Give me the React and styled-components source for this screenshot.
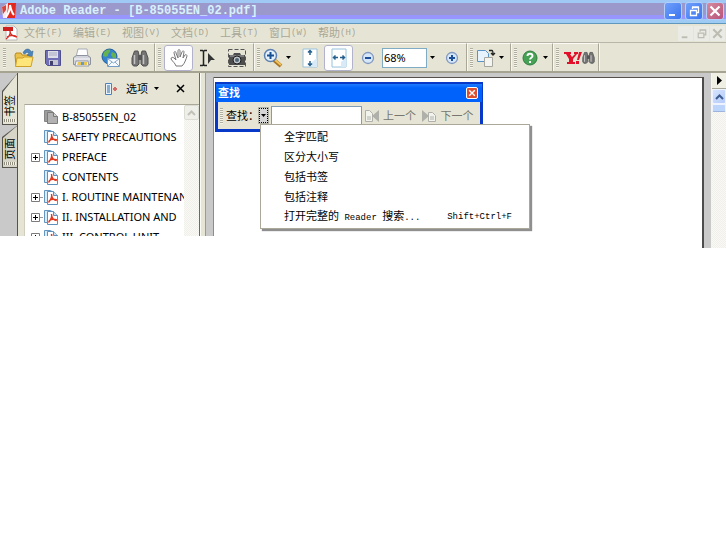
import styled, { createGlobalStyle, css } from 'styled-components';

const cjk = `"Liberation Sans", "Noto Sans CJK SC", sans-serif`;
const mono = `"Liberation Mono", "Noto Sans CJK SC", monospace`;
const tahoma = `"Noto Sans", "Noto Sans CJK SC", sans-serif`;

const beige = '#e6e5d5';
const grey = '#c9c9c9';

const GlobalStyle = createGlobalStyle`
  * {
    box-sizing: border-box;
  }

  body {
    margin: 0;
    background: #fff;
    color: #000;
    font-family: ${cjk};
    font-size: 11px;
    line-height: 16px;
  }

  button,
  input {
    margin: 0;
    padding: 0;
    border: 0;
    border-radius: 0;
    background: none;
    color: inherit;
    font: inherit;
  }

  ul {
    margin: 0;
    padding: 0;
    list-style: none;
  }

  svg {
    display: block;
    flex: none;
  }
`;

const TitleBar = styled.header`
  display: flex;
  align-items: center;
  height: 24px;
  padding: 0 2px 1px 1px;
  gap: 3px;
  border-bottom: 1px solid #5f97bd;
  background: linear-gradient(
    #9fc8f5 0 3px,
    #9b98cb 3px 15px,
    #9896fd 15px 19px,
    #9ecbf4 19px
  );
`;

const WindowTitle = styled.h1`
  flex: 1;
  margin: 0;
  color: #d9f1ff;
  font-family: ${mono};
  font-size: 12px;
  font-weight: 700;
  line-height: 20px;
  white-space: nowrap;
`;

const WindowButton = styled.button`
  width: 18px;
  height: 18px;
  border: 1px solid #b4d0fa;
  border-radius: 3px;
  background: ${({ $close }) =>
    $close
      ? 'linear-gradient(135deg, #d58b9d, #b8537a)'
      : 'linear-gradient(135deg, #6fa0fb, #3c74ee)'};
`;

const MenuBar = styled.nav`
  display: flex;
  align-items: center;
  height: 18px;
  padding: 0 1px 0 3px;
  background: ${beige};
`;

const MenuList = styled.ul`
  display: flex;
  flex: 1;
  margin-left: 6px;
`;

const MenuItem = styled.li`
  width: 49px;
`;

const MenuButton = styled.button`
  display: flex;
  color: #a9a797;
  white-space: nowrap;
`;

const Latin = styled.span`
  font-family: ${mono};
  font-size: 9px;
`;

const MdiButton = styled.button`
  width: 15px;
  height: 15px;
  margin-left: 1px;
  background: #ebebe6;
`;

const Toolbar = styled.div`
  display: flex;
  height: 31px;
  border-top: 1px solid #b7b6a8;
  border-bottom: 2px solid #a5a392;
  background: ${beige};
`;

const ToolGroup = styled.div`
  display: flex;
  align-items: center;
  padding: 0 ${({ $tight }) => ($tight ? '0' : '2px')} 0 3px;
  border-top: 1px solid #fbfbf4;
  border-right: 1px solid #a9a798;
  box-shadow: 1px 0 #f8f8f0;
`;

const Grip = styled.span`
  flex: none;
  width: 3px;
  height: ${({ $short }) => ($short ? '16px' : '20px')};
  margin-right: 3px;
  background: repeating-linear-gradient(#b0af9f 0 1px, #f4f4ea 1px 2px);
`;

const ToolButton = styled.button`
  display: flex;
  align-items: center;
  justify-content: center;
  width: 29px;
  height: 26px;
  border-radius: 3px;

  ${({ $active }) =>
    $active &&
    css`
      border: 1px solid #b3b2cd;
      background: #fdfdfd;
    `}
`;

const DropButton = styled(ToolButton)`
  justify-content: flex-start;
  gap: 3px;
  width: 32px;
`;

const SearchButton = styled(ToolButton)`
  width: 34px;
`;

const ZoomBox = styled.div`
  display: flex;
  align-items: center;
  width: 55px;
`;

const ZoomInput = styled.input`
  width: 45px;
  height: 20px;
  padding-left: 1px;
  border: 1px solid #7fabc4;
  background: #fff;
  font-family: ${tahoma};
`;

const CaretButton = styled.button`
  display: flex;
  align-items: center;
  justify-content: center;
  width: 10px;
  height: 20px;
`;

const Workspace = styled.main`
  display: flex;
  align-items: flex-start;
`;

const LeftPane = styled.aside`
  display: flex;
  flex: none;
  height: 163px;
  overflow: hidden;
  background: ${grey};
`;

const TabStrip = styled.div`
  width: 18px;
  padding-left: 2px;
  border-right: 1px solid #55544c;
`;

const SideTab = styled.button`
  display: block;
  width: 16px;
  height: ${({ $height }) => $height}px;
  padding: 1px;
  background: #55544c;
  clip-path: polygon(100% 0, 100% 100%, 0 100%, 0 ${({ $slant }) => $slant}px);
`;

const SideTabFace = styled.span`
  display: flex;
  align-items: center;
  justify-content: flex-end;
  flex-direction: column;
  height: 100%;
  padding-bottom: 2px;
  gap: 2px;
  background: ${({ $active }) => ($active ? beige : '#d6d5c8')};
  clip-path: polygon(100% 0, 100% 100%, 0 100%, 0 ${({ $slant }) => $slant}px);
`;

const SideLabel = styled.span`
  writing-mode: vertical-rl;
  text-orientation: sideways;
  transform: rotate(180deg);
  font-size: 11px;
  line-height: 14px;
`;

const TabGrip = styled.span`
  width: 12px;
  height: 3px;
  background: repeating-linear-gradient(90deg, #918f80 0 1px, #f4f4ea 1px 2px);
`;

const Bookmarks = styled.section`
  width: 182px;
  padding-left: 6px;
  border-right: 1px solid #6b6a66;
  background: ${beige};
`;

const BookmarksHeader = styled.div`
  display: flex;
  align-items: center;
  justify-content: flex-end;
  height: 31px;
  padding-right: 14px;
`;

const OptionsButton = styled.button`
  display: flex;
  align-items: center;
  gap: 6px;
  margin-right: 17px;

  svg:first-child {
    margin-right: 2px;
  }
`;

const TreeBox = styled.div`
  display: flex;
  height: 132px;
  border-top: 1px solid #aaa999;
  border-left: 1px solid #cfcebf;
  background: #fff;
`;

const Tree = styled.ul`
  flex: 1;
  min-width: 0;
  padding: 2px 0 0 6px;
  overflow: hidden;
`;

const TreeRow = styled.li`
  display: flex;
  align-items: center;
  height: 20px;
  font-family: ${tahoma};
  white-space: nowrap;
`;

const Expander = styled.button`
  flex: none;
  width: 12px;
  height: 9px;
`;

const Indent = styled.span`
  flex: none;
  width: 12px;
`;

const TreeLink = styled.a`
  display: flex;
  align-items: center;
  gap: 3px;
  color: #000;
  text-decoration: none;
`;

const Track = styled.div`
  flex: none;
  width: 15px;
  background: repeating-conic-gradient(#f0efe9 0 25%, #f9f9f6 0 50%) 0 0 / 2px 2px;
`;

const ScrollButton = styled.button`
  display: flex;
  align-items: center;
  justify-content: center;
  width: 100%;
  height: 15px;
  border: 1px solid ${({ $dim }) => ($dim ? '#dddcd2' : '#eef3ff')};
  border-radius: 2px;
  background: ${({ $dim }) => ($dim ? '#efefe9' : 'linear-gradient(135deg, #d5e3fd, #b5cbfa)')};
`;

const Splitter = styled.div`
  flex: none;
  width: 6px;
  height: 163px;
  border-right: 1px solid #9b9a93;
  border-left: 1px solid #fbfbf5;
  background: ${beige};
`;

const Gutter = styled.div`
  flex: none;
  width: 8px;
  height: 163px;
  padding-top: 4px;
  background: ${grey};

  &::after {
    content: '';
    display: block;
    height: 100%;
    border-right: 1px solid #97897c;
  }
`;

const PageArea = styled.div`
  flex: 1;
  height: 175px;
  padding: 4px 7px 0 0;
  background: linear-gradient(${grey} 6px, transparent 6px),
    linear-gradient(270deg, ${grey} 8px, transparent 8px);
`;

const Page = styled.div`
  position: relative;
  height: 171px;
  border-top: 1px solid #55504c;
  border-right: 2px solid #4c4c4c;
  background: #fff;
`;

const PageScroll = styled(Track)`
  height: 175px;
  border-left: 1px solid #f6f6ee;
`;

const PaneButton = styled.button`
  display: flex;
  align-items: center;
  justify-content: center;
  width: 100%;
  height: 16px;
  border-bottom: 1px solid #aaa89a;
  background: #f0efe4;
`;

const Thumb = styled.div`
  height: 8px;
  border: 1px solid #eef3ff;
  border-bottom-color: #9db5dc;
  border-radius: 2px;
  background: #bdd4fb;
`;

const FindWindow = styled.section`
  position: absolute;
  top: 4px;
  left: 1px;
  width: 268px;
  padding: 2px 3px 3px;
  background: #0838c8;
`;

const FindTitle = styled.div`
  display: flex;
  align-items: center;
  justify-content: space-between;
  height: 18px;
  margin: 0 -2px;
  padding: 0 4px 0 2px;
  background: linear-gradient(#1d7bff, #0062fb 4px);
`;

const FindHeading = styled.h2`
  margin: 0;
  color: #fff;
  font-size: 11px;
  line-height: 16px;
`;

const FindClose = styled.button`
  display: flex;
  align-items: center;
  justify-content: center;
  width: 12px;
  height: 12px;
  border: 1px solid #fff;
  border-radius: 2px;
  background: #dc5030;
`;

const FindBody = styled.div`
  display: flex;
  align-items: center;
  height: 27px;
  padding-left: 2px;
  background: ${beige};
`;

const FindLabel = styled.label`
  width: 33px;
  white-space: nowrap;
`;

const FindDrop = styled.button`
  display: flex;
  align-items: center;
  justify-content: center;
  width: 9px;
  height: 15px;
  margin-right: 3px;
  border: 1px dotted #000;
  background: #d5d5d5;
  box-shadow: 0 0 0 1px #b3b2a6;
`;

const FindInput = styled.input`
  width: 91px;
  height: 20px;
  margin-right: 3px;
  padding: 0 3px;
  border: 1px solid #7f9db9;
  background: #fff;
`;

const FindStep = styled.button`
  display: flex;
  align-items: center;
  gap: 4px;
  width: 58px;
  color: #77776f;
  white-space: nowrap;
`;

const FindMenu = styled.ul`
  position: absolute;
  top: 42px;
  left: 45px;
  z-index: 1;
  width: 270px;
  padding: 2px 0 1px;
  border: 1px solid #aca899;
  background: #fff;
  box-shadow: 2px 2px 1px #8f8f8f;
`;

const FindMenuItem = styled.li`
  height: 20px;
`;

const FindMenuButton = styled.button`
  display: flex;
  justify-content: space-between;
  align-items: center;
  width: 100%;
  height: 20px;
  padding: 0 17px 0 23px;
  white-space: pre;
`;

const AdobeLogo = () => (
  <svg width="16" height="18" viewBox="0 0 16 18">
    <path d="M7 1h8l-1 15H5z" fill="#e5281e" />
    <path d="M1 5l6-4-1 15H2z" fill="#fbeaea" />
    <path d="M1 5l4-2v5l-3 4z" fill="#d8453c" />
    <path d="M9 3C9 8 8 11 5 15M9 3c1 5 2 8 4 10" stroke="#fff" strokeWidth="2" fill="none" />
  </svg>
);

const PdfIcon = ({ plain }) => (
  <svg width="16" height="16" viewBox="0 0 16 16">
    {plain ? (
      <>
        <path d="M1.500 1.500h6l3 2v9h-9z" fill="#9d9d9d" stroke="#858585" />
        <path d="M4.500 3.500h6l4 4v7h-10z" fill="#b2b2b2" stroke="#7b7b7b" />
        <path d="M10.500 3.500v4h4" fill="#d0d0d0" stroke="#7b7b7b" />
      </>
    ) : (
      <>
        <path d="M1.500 1.500h6l3 2v10h-9z" fill="#d8ebfa" stroke="#6495bf" />
        <path d="M4.500 2.500h6l4 4v9h-10z" fill="#fff" stroke="#5f90bb" />
        <path d="M10.500 2.500v4h4" fill="#c8e0f4" stroke="#5f90bb" />
        <path d="M8.500 5c1 3-1 6-3 8.500M8.500 5c0 4 2 6 5 6.500M6 12c2-2 5-2 8-1" fill="none" stroke="#e2391f" strokeWidth="1.400" />
      </>
    )}
  </svg>
);

const DocIcon = () => (
  <svg width="15" height="16" viewBox="0 0 15 16">
    <path d="M3 1h8l3 3v11H3z" fill="#fff" stroke="#b8b8b8" />
    <path d="M0 2h10v4H0z" fill="#cf2020" />
    <path d="M7 6c1 3-2 7-4 8M7 6c0 4 3 5 7 6M4 12c3-2 6-2 9-1" fill="none" stroke="#d92a20" strokeWidth="1.300" />
  </svg>
);

const Caret = () => (
  <svg width="5" height="3" viewBox="0 0 5 3">
    <path d="M0 0h5L2.500 3z" fill="#000" />
  </svg>
);

const MinGlyph = ({ color = '#fff' }) => (
  <svg width="100%" height="100%" viewBox="0 0 16 16">
    <path d="M4 11h6v2H4z" fill={color} />
  </svg>
);

const RestoreGlyph = ({ color = '#fff' }) => (
  <svg width="100%" height="100%" viewBox="0 0 16 16">
    <path d="M6.500 6V4.500h6v5H11M6 4h7M4.500 7.500h6v5h-6zM4 7.500h7" fill="none" stroke={color} strokeWidth="1.300" />
  </svg>
);

const CloseGlyph = ({ color = '#fff' }) => (
  <svg width="100%" height="100%" viewBox="0 0 16 16">
    <path d="M3.500 3.500l9 9M12.500 3.500l-9 9" stroke={color} strokeWidth="2.200" />
  </svg>
);

const OpenIcon = () => (
  <svg width="20" height="20" viewBox="0 0 20 20">
    <path d="M1 7l1-2h5l1 2h8v11H2z" fill="#eac14a" stroke="#b98a1c" />
    <path d="M9 5c2-5 7-5 8-1l2-1-1 6-5-2 2-1c-1-2-3-2-4 0z" fill="#4d86bd" stroke="#33658f" strokeWidth=".6" />
    <path d="M1.500 18.500L3 10h6l1-1h9l-2 9.500z" fill="#fde57a" stroke="#cfa028" />
  </svg>
);

const SaveIcon = () => (
  <svg width="18" height="18" viewBox="0 0 18 18">
    <path d="M1.500 1.500h15v15h-13l-2-2z" fill="#7170b6" stroke="#504f8d" />
    <path d="M4 2h10v7H4z" fill="#dcdde6" />
    <path d="M5 4h8M5 6h8" stroke="#a9abc4" />
    <path d="M5 11h9v5H5z" fill="#c6c6d2" />
    <path d="M6 12h3v4H6z" fill="#41416c" />
  </svg>
);

const PrintIcon = () => (
  <svg width="20" height="20" viewBox="0 0 20 20">
    <path d="M6 1h9l1 8H4z" fill="#fff" stroke="#a5abb5" />
    <path d="M1.500 9.500l3-2h11l3 2v7h-17z" fill="#d1d4da" stroke="#8d929c" />
    <path d="M2 11h16" stroke="#f8f8f8" />
    <path d="M4 13h12l1 5H3z" fill="#f4f4f4" stroke="#989ca4" />
    <path d="M6 14h9v3H5z" fill="#e9c650" />
    <path d="M9 14h3v3H9z" fill="#659bca" />
  </svg>
);

const MailIcon = () => (
  <svg width="20" height="20" viewBox="0 0 20 20">
    <circle cx="8.500" cy="8.500" r="7.500" fill="#3483cc" stroke="#205d99" />
    <path d="M3 4c2-2 5-3 6-2 1 2-2 3-2 5s-3 2-5 1zM11 4l4 2v5l-3-1-2-3z" fill="#65b24f" />
    <path d="M6.500 10.500h12v8h-12z" fill="#f7fbff" stroke="#759dc4" />
    <path d="M7 11l5.500 4 5.500-4M7 18l4-4M18 18l-4-4" fill="none" stroke="#88abcb" />
  </svg>
);

const Binoculars = ({ size = 18 }) => (
  <svg width={size} height={size} viewBox="0 0 18 18">
    <path d="M3.500 2h3.500l1 4v9l-2 2H2.500L1 15V9zM11 2h3.500L17 9v6l-1.500 2H12l-2-2V6z" fill="#757575" stroke="#505050" />
    <path d="M7 6h4v5H7z" fill="#565656" />
    <path d="M3.500 6v9M12.500 6v9" stroke="#c4c4c4" strokeWidth="1.500" />
  </svg>
);

const HandIcon = () => (
  <svg width="20" height="20" viewBox="0 0 20 20">
    <path
      d="M7 18c-1-3-3-4-5-7 0-2 2-2 3-1l2 2-2-7c0-2 2-2 2 0l2 5V3c0-2 2-2 2 0v6l2-5c1-2 2-1 2 0l-1 6 2-3c1-1 2 0 2 1-1 3-2 7-5 10z"
      fill="#fff"
      stroke="#777"
    />
  </svg>
);

const TextSelectIcon = () => (
  <svg width="18" height="18" viewBox="0 0 18 18">
    <path d="M1 1.500h2.500l1 1 1-1H8M4.500 2v14M1 16.500h2.500l1-1 1 1H8" fill="none" stroke="#222" strokeWidth="1.500" />
    <path d="M9 4l7 7h-4l-3 4z" fill="#333" />
  </svg>
);

const SnapshotIcon = () => (
  <svg width="20" height="20" viewBox="0 0 20 20">
    <path d="M1.500 1.500h17v17h-17z" fill="none" stroke="#555" strokeDasharray="4 2" />
    <path d="M2 7h4l1-2h6l1 2h4v10H2z" fill="#4d4d4d" />
    <path d="M3 8h14" stroke="#a9a9a9" />
    <circle cx="10" cy="12" r="4" fill="#bfc5cb" stroke="#1d1d1d" />
    <circle cx="10" cy="12" r="2" fill="#4f6371" />
  </svg>
);

const LoupeIcon = () => (
  <svg width="20" height="20" viewBox="0 0 20 20">
    <path d="M11 12l7 6" stroke="#a87424" strokeWidth="4" />
    <path d="M12 12l6 5" stroke="#f0c35e" strokeWidth="2" />
    <circle cx="7.500" cy="7.500" r="6" fill="#e3f1fd" stroke="#5d80b0" strokeWidth="1.500" />
    <path d="M4 7.500h7M7.500 4v7" stroke="#174f94" strokeWidth="2" />
  </svg>
);

const FitIcon = ({ wide }) => (
  <svg width="16" height="20" viewBox="0 0 16 20">
    <path d="M1 1h14v18H1z" fill="#fff" stroke="#98c1dc" />
    <path d="M10 19v-5l5-4v9z" fill="#d8e9f7" />
    {wide ? (
      <path d="M7 9.500H3M4.500 7.500l-2 2 2 2M9 9.500h4M11.500 7.500l2 2-2 2" fill="none" stroke="#245f8d" strokeWidth="1.500" />
    ) : (
      <path d="M8 7V3M6 4.500l2-2 2 2M8 13v4M6 15.500l2 2 2-2" fill="none" stroke="#245f8d" strokeWidth="1.500" />
    )}
  </svg>
);

const StepIcon = ({ plus }) => (
  <svg width="14" height="14" viewBox="0 0 14 14">
    <circle cx="7" cy="7" r="5.500" fill="#d7e7fa" stroke="#8299bf" strokeWidth="1.300" />
    <path d={plus ? 'M4 7h6M7 4v6' : 'M4 7h6'} stroke="#1c4f99" strokeWidth="2" />
  </svg>
);

const RotateIcon = () => (
  <svg width="20" height="20" viewBox="0 0 20 20">
    <path d="M1.500 2.500h8l3 3v8h-11z" fill="#e6f3fe" stroke="#5d93c4" />
    <path d="M8.500 9.500h8v9h-8z" fill="#f4f4f0" stroke="#a6a69e" />
    <path d="M13 2.500h3c1 0 1 1 1 4M15 5l2 2 2-2" fill="none" stroke="#222" strokeWidth="1.300" />
  </svg>
);

const HelpIcon = () => (
  <svg width="20" height="20" viewBox="0 0 20 20">
    <circle cx="10" cy="10" r="7" fill="#48a256" stroke="#2f7d3f" />
    <path d="M7.500 8c0-3 5-3 5 0 0 1.700-2.500 1.700-2.500 3.600M10 13v2" fill="none" stroke="#fff" strokeWidth="1.900" />
  </svg>
);

const YahooIcon = () => (
  <svg width="18" height="14" viewBox="0 0 18 14">
    <path d="M0 1h7v2H6l2 3 3-3h-1V1h4v2h-1L9 8v3h2v2H3v-2h2V8L2 3H0zM15 1h3l-3 8h-2zM12 10h3v3h-3z" fill="#e2112b" />
  </svg>
);

const OptionsIcon = () => (
  <svg width="13" height="12" viewBox="0 0 13 12">
    <path d="M.5.500h6v11h-6z" fill="#e9f3fd" stroke="#4a83bb" />
    <path d="M2 3h3M2 5h3M2 7h3M2 9h3" stroke="#316b9f" />
    <path d="M8 6h4M10 4v4" stroke="#d46a6a" strokeWidth="2" />
  </svg>
);

const PlusBox = () => (
  <svg width="12" height="9" viewBox="0 0 12 9">
    <path d="M.5.500h8v8h-8z" fill="#fff" stroke="#7b7b7b" />
    <path d="M2 4.500h5M4.500 2v5" stroke="#000" />
    <path d="M9 4.500h3" stroke="#999" />
  </svg>
);

const Chevron = ({ color }) => (
  <svg width="9" height="6" viewBox="0 0 9 6">
    <path d="M1 5l3.500-3.500L8 5" fill="none" stroke={color} strokeWidth="2" />
  </svg>
);

const StepPageIcon = ({ next }) => (
  <svg width="14" height="14" viewBox="0 0 14 14">
    {next ? (
      <>
        <path d="M0 1l7 6-7 6z" fill="#b0b0aa" />
        <path d="M6.500 3.500h4l3 3v6h-7z" fill="#f3f3ed" stroke="#b0b0aa" />
        <path d="M8 8h4M8 10h4" stroke="#b0b0aa" />
      </>
    ) : (
      <>
        <path d="M.5 1.500h4l3 3v8h-7z" fill="#f3f3ed" stroke="#b0b0aa" />
        <path d="M2 8h4M2 10h4" stroke="#b0b0aa" />
        <path d="M14 1L7 7l7 6z" fill="#b0b0aa" />
      </>
    )}
  </svg>
);

const menus = [
  ['文件', '(F)'],
  ['编辑', '(E)'],
  ['视图', '(V)'],
  ['文档', '(D)'],
  ['工具', '(T)'],
  ['窗口', '(W)'],
  ['帮助', '(H)'],
];

const bookmarks = [
  { title: 'B-85055EN_02', plain: true },
  { title: 'SAFETY PRECAUTIONS' },
  { title: 'PREFACE', children: true },
  { title: 'CONTENTS' },
  { title: 'I. ROUTINE MAINTENANCE', children: true },
  { title: 'II. INSTALLATION AND', children: true },
  { title: 'III. CONTROL UNIT', children: true },
];

const findOptions = ['全字匹配', '区分大小写', '包括书签', '包括注释'];

const FindPanel = () => (
  <FindWindow>
    <FindTitle>
      <FindHeading>查找</FindHeading>
      <FindClose aria-label="关闭">
        <CloseGlyph />
      </FindClose>
    </FindTitle>
    <FindBody>
      <Grip $short />
      <FindLabel htmlFor="find">查找：</FindLabel>
      <FindDrop aria-label="查找选项">
        <Caret />
      </FindDrop>
      <FindInput id="find" type="text" />
      <FindStep>
        <StepPageIcon />
        上一个
      </FindStep>
      <FindStep>
        <StepPageIcon next />
        下一个
      </FindStep>
    </FindBody>
    <FindMenu>
      {findOptions.map((label) => (
        <FindMenuItem key={label}>
          <FindMenuButton>{label}</FindMenuButton>
        </FindMenuItem>
      ))}
      <FindMenuItem>
        <FindMenuButton>
          <span>
            打开完整的<Latin> Reader </Latin>搜索<Latin>...</Latin>
          </span>
          <Latin>Shift+Ctrl+F</Latin>
        </FindMenuButton>
      </FindMenuItem>
    </FindMenu>
  </FindWindow>
);

const App = () => (
  <>
    <GlobalStyle />
    <TitleBar>
      <AdobeLogo />
      <WindowTitle>Adobe Reader - [B-85055EN_02.pdf]</WindowTitle>
      <WindowButton aria-label="最小化">
        <MinGlyph />
      </WindowButton>
      <WindowButton aria-label="还原">
        <RestoreGlyph />
      </WindowButton>
      <WindowButton $close aria-label="关闭">
        <CloseGlyph />
      </WindowButton>
    </TitleBar>

    <MenuBar>
      <DocIcon />
      <MenuList>
        {menus.map(([name, key]) => (
          <MenuItem key={key}>
            <MenuButton>
              {name}
              <Latin>{key}</Latin>
            </MenuButton>
          </MenuItem>
        ))}
      </MenuList>
      <MdiButton aria-label="最小化文档">
        <MinGlyph color="#bcbcb2" />
      </MdiButton>
      <MdiButton aria-label="还原文档">
        <RestoreGlyph color="#bcbcb2" />
      </MdiButton>
      <MdiButton aria-label="关闭文档">
        <CloseGlyph color="#bcbcb2" />
      </MdiButton>
    </MenuBar>

    <Toolbar>
      <ToolGroup $tight>
        <Grip />
        <ToolButton aria-label="打开">
          <OpenIcon />
        </ToolButton>
        <ToolButton aria-label="保存">
          <SaveIcon />
        </ToolButton>
        <ToolButton aria-label="打印">
          <PrintIcon />
        </ToolButton>
        <ToolButton aria-label="电子邮件">
          <MailIcon />
        </ToolButton>
        <ToolButton aria-label="搜索">
          <Binoculars />
        </ToolButton>
      </ToolGroup>
      <ToolGroup>
        <Grip />
        <ToolButton $active aria-label="手形工具">
          <HandIcon />
        </ToolButton>
        <ToolButton aria-label="选择工具">
          <TextSelectIcon />
        </ToolButton>
        <ToolButton aria-label="快照工具">
          <SnapshotIcon />
        </ToolButton>
      </ToolGroup>
      <ToolGroup $tight>
        <Grip />
        <DropButton aria-label="放大工具">
          <LoupeIcon />
          <Caret />
        </DropButton>
        <ToolButton aria-label="适合页面">
          <FitIcon />
        </ToolButton>
        <ToolButton $active aria-label="适合宽度">
          <FitIcon wide />
        </ToolButton>
        <ToolButton aria-label="缩小">
          <StepIcon />
        </ToolButton>
        <ZoomBox>
          <ZoomInput aria-label="缩放" defaultValue="68%" />
          <CaretButton aria-label="缩放比例">
            <Caret />
          </CaretButton>
        </ZoomBox>
        <ToolButton aria-label="放大">
          <StepIcon plus />
        </ToolButton>
      </ToolGroup>
      <ToolGroup>
        <Grip />
        <DropButton aria-label="旋转">
          <RotateIcon />
          <Caret />
        </DropButton>
      </ToolGroup>
      <ToolGroup $tight>
        <Grip />
        <DropButton aria-label="帮助">
          <HelpIcon />
          <Caret />
        </DropButton>
      </ToolGroup>
      <ToolGroup>
        <Grip />
        <SearchButton aria-label="Yahoo">
          <YahooIcon />
          <Binoculars size={13} />
        </SearchButton>
      </ToolGroup>
    </Toolbar>

    <Workspace>
      <LeftPane>
        <TabStrip>
          <SideTab $height={52} $slant={18}>
            <SideTabFace $active $slant={18}>
              <SideLabel>书签</SideLabel>
              <TabGrip />
            </SideTabFace>
          </SideTab>
          <SideTab $height={43} $slant={12}>
            <SideTabFace $slant={12}>
              <SideLabel>页面</SideLabel>
              <TabGrip />
            </SideTabFace>
          </SideTab>
        </TabStrip>
        <Bookmarks>
          <BookmarksHeader>
            <OptionsButton>
              <OptionsIcon />
              选项
              <Caret />
            </OptionsButton>
            <button aria-label="关闭书签">
              <svg width="9" height="9" viewBox="0 0 9 9">
                <path d="M1 1l7 7M8 1L1 8" stroke="#000" strokeWidth="1.500" />
              </svg>
            </button>
          </BookmarksHeader>
          <TreeBox>
            <Tree>
              {bookmarks.map(({ title, plain, children }) => (
                <TreeRow key={title}>
                  {children ? (
                    <Expander aria-label={`展开 ${title}`}>
                      <PlusBox />
                    </Expander>
                  ) : (
                    <Indent />
                  )}
                  <TreeLink href="#">
                    <PdfIcon plain={plain} />
                    {title}
                  </TreeLink>
                </TreeRow>
              ))}
            </Tree>
            <Track>
              <ScrollButton $dim aria-label="向上滚动书签">
                <Chevron color="#c3c2b8" />
              </ScrollButton>
            </Track>
          </TreeBox>
        </Bookmarks>
      </LeftPane>
      <Splitter />
      <Gutter />
      <PageArea>
        <Page>
          <FindPanel />
        </Page>
      </PageArea>
      <PageScroll>
        <PaneButton aria-label="显示窗格">
          <svg width="5" height="9" viewBox="0 0 5 9">
            <path d="M0 0l5 4.500L0 9z" fill="#000" />
          </svg>
        </PaneButton>
        <ScrollButton aria-label="向上滚动">
          <Chevron color="#3d5c90" />
        </ScrollButton>
        <Thumb />
      </PageScroll>
    </Workspace>
  </>
);

export default App;
